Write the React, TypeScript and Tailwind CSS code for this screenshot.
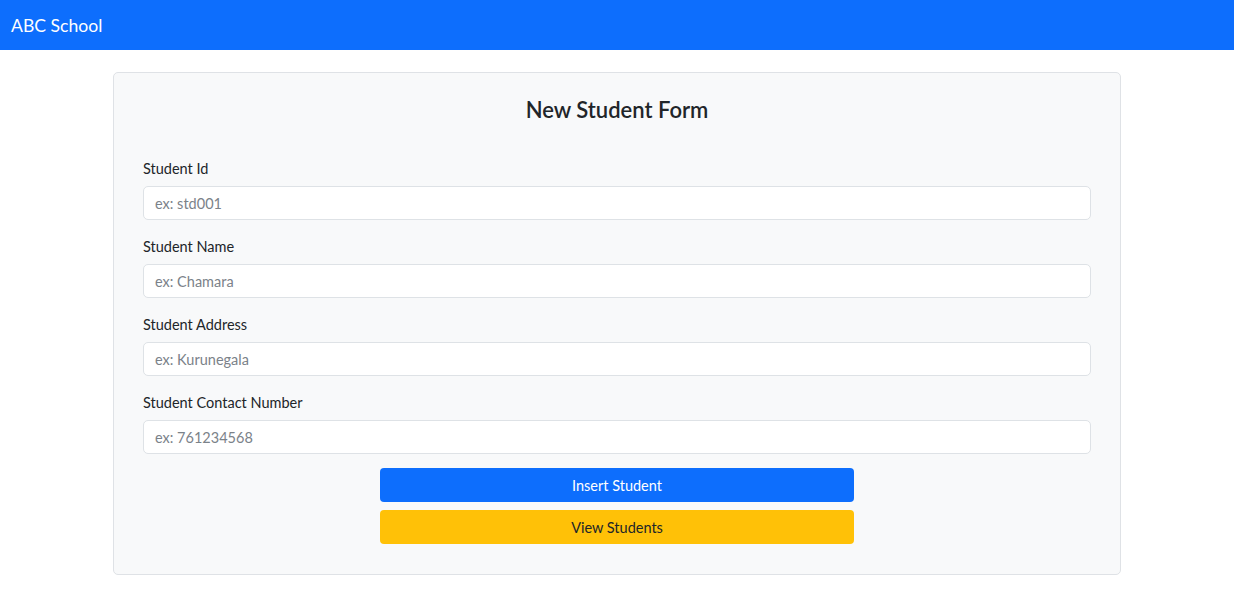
import React from 'react';

const fields = [
  { label: 'Student Id', placeholder: 'ex: std001' },
  { label: 'Student Name', placeholder: 'ex: Chamara' },
  { label: 'Student Address', placeholder: 'ex: Kurunegala' },
  { label: 'Student Contact Number', placeholder: 'ex: 761234568' },
];

export default function App() {
  return (
    <div className="min-h-screen bg-white text-[#212529] font-['Lato','Open_Sans',sans-serif]">
      {/* Navbar */}
      <nav className="h-[50px] bg-[#0d6efd] flex items-center px-[11px]">
        <span className="text-white text-[17.6px] leading-none pt-[1px]">ABC School</span>
      </nav>

      {/* Form card */}
      <div className="mt-[22px] mx-auto w-[1008px] bg-[#f8f9fa] border border-[#dfe2e6] rounded-[5px] px-[29px] pt-[24px] pb-[30px]">
        <h3 className="text-center text-[22px] font-semibold leading-[26px] mb-[34px]">New Student Form</h3>

        <div className="flex flex-col gap-[15px]">
          {fields.map((f) => (
            <div key={f.label} className="flex flex-col gap-[7px]">
              <label className="block h-[22px] text-[14.5px] leading-[24px]">{f.label}</label>
              <input
                type="text"
                placeholder={f.placeholder}
                className="h-[34px] w-full bg-white border border-[#dee2e6] rounded-[5px] px-[11px] text-[14.5px] placeholder:text-[#7b8289] outline-none"
              />
            </div>
          ))}
        </div>

        <div className="mt-[14px] flex flex-col items-center gap-[8px]">
          <button className="w-[474px] h-[34px] rounded-[4px] bg-[#0d6efd] text-white text-[14.5px] pt-[2px]">Insert Student</button>
          <button className="w-[474px] h-[34px] rounded-[4px] bg-[#ffc107] text-[#212529] text-[14.5px] pt-[2px]">View Students</button>
        </div>
      </div>
    </div>
  );
}
